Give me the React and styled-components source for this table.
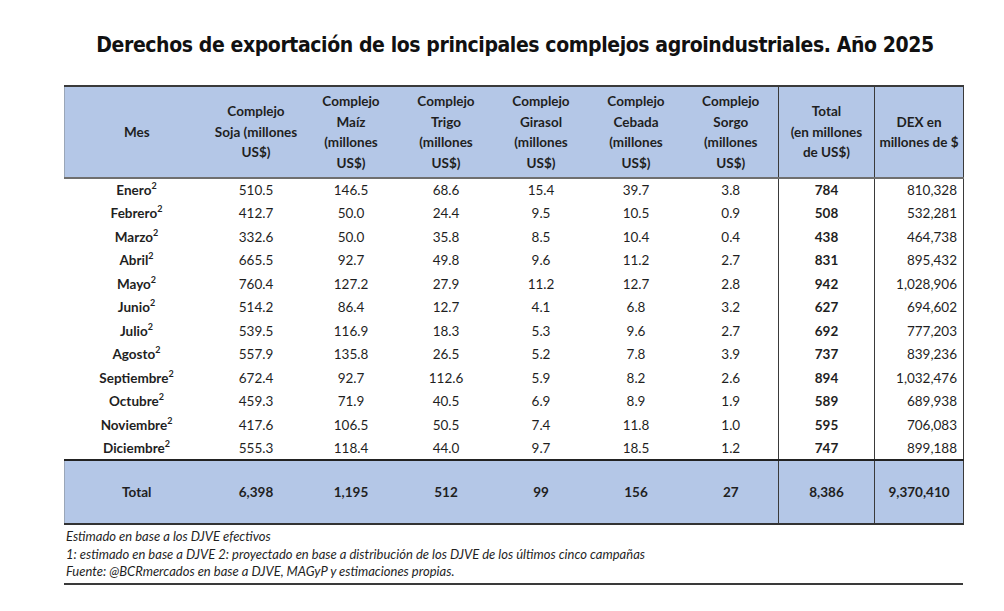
import React from "react";
import styled, { createGlobalStyle } from "styled-components";

const GlobalStyle = createGlobalStyle`
  body {
    margin: 0;
    background: #ffffff;
    font-family: Lato, "Liberation Sans", sans-serif;
    color: #1f1f1f;
  }
`;

const Page = styled.div`
  width: 1004px;
  padding-top: 30px;
`;

const TitleBar = styled.div`
  display: flex;
  justify-content: center;
  height: 30px;
  margin-bottom: 25px;
  padding-left: 26px;
`;

const Title = styled.h1`
  margin: 0;
  white-space: nowrap;
  font-family: "DejaVu Sans", "Liberation Sans", sans-serif;
  font-stretch: condensed;
  font-size: 21px;
  font-weight: 700;
  letter-spacing: -0.4px;
  line-height: 30px;
  color: #111;
`;

const Block = styled.div`
  margin-left: 64px;
  width: 899px;
`;

const Table = styled.table`
  width: 899px;
  border-collapse: collapse;
  table-layout: fixed;
  font-size: 13.5px;
`;

const Head = styled.th`
  background: #b4c7e7;
  height: 90px;
  padding: 0 2px;
  font-weight: 700;
  line-height: 20.5px;
  text-align: center;
  vertical-align: middle;
  border-top: 2px solid #3a3a3a;
  border-bottom: 2px solid #6f6f6f;
  border-left: ${(p) => (p.$edge ? "1px solid #9aa6b8" : p.$rule ? "1.5px solid #3a3a3a" : "none")};
  border-right: ${(p) => (p.$rule ? "1.5px solid #3a3a3a" : "none")};
`;

const Row = styled.tr`
  height: 23.5px;
`;

const Cell = styled.td`
  padding: 0 ${(p) => (p.$right ? "6px" : "2px")};
  text-align: ${(p) => (p.$right ? "right" : "center")};
  font-weight: ${(p) => (p.$bold ? 700 : 400)};
  border-left: ${(p) => (p.$rule ? "1.5px solid #3a3a3a" : "none")};
  border-right: ${(p) => (p.$rule ? "1.5px solid #3a3a3a" : "none")};
  white-space: nowrap;
`;

const Sup = styled.sup`
  font-size: 9px;
  line-height: 0;
  vertical-align: 6px;
`;

const TotalRow = styled.tr`
  height: 64px;
  background: #b4c7e7;
  border-top: 2px solid #222;
  border-bottom: 2px solid #333;
`;

const TotalCell = styled.td`
  text-align: center;
  font-weight: 700;
  border-left: ${(p) => (p.$edge ? "1px solid #9aa6b8" : p.$rule ? "1.5px solid #3a3a3a" : "none")};
  border-right: ${(p) => (p.$rule ? "1.5px solid #3a3a3a" : "none")};
`;

const Notes = styled.div`
  padding: 3px 0 2px 2px;
  font-family: Lato, "Liberation Sans", sans-serif;
  font-style: italic;
  font-size: 13px;
  line-height: 17.5px;
  color: #1f1f1f;
  border-bottom: 2px solid #3a3a3a;
`;

const columns = [
  ["Mes"],
  ["Complejo", "Soja (millones", "US$)"],
  ["Complejo", "Maíz", "(millones", "US$)"],
  ["Complejo", "Trigo", "(millones", "US$)"],
  ["Complejo", "Girasol", "(millones", "US$)"],
  ["Complejo", "Cebada", "(millones", "US$)"],
  ["Complejo", "Sorgo", "(millones", "US$)"],
  ["Total", "(en millones", "de US$)"],
  ["DEX en", "millones de $"],
];

const widths = [144, 95, 95, 95, 95, 95, 95, 96, 89];

const rows = [
  ["Enero", "510.5", "146.5", "68.6", "15.4", "39.7", "3.8", "784", "810,328"],
  ["Febrero", "412.7", "50.0", "24.4", "9.5", "10.5", "0.9", "508", "532,281"],
  ["Marzo", "332.6", "50.0", "35.8", "8.5", "10.4", "0.4", "438", "464,738"],
  ["Abril", "665.5", "92.7", "49.8", "9.6", "11.2", "2.7", "831", "895,432"],
  ["Mayo", "760.4", "127.2", "27.9", "11.2", "12.7", "2.8", "942", "1,028,906"],
  ["Junio", "514.2", "86.4", "12.7", "4.1", "6.8", "3.2", "627", "694,602"],
  ["Julio", "539.5", "116.9", "18.3", "5.3", "9.6", "2.7", "692", "777,203"],
  ["Agosto", "557.9", "135.8", "26.5", "5.2", "7.8", "3.9", "737", "839,236"],
  ["Septiembre", "672.4", "92.7", "112.6", "5.9", "8.2", "2.6", "894", "1,032,476"],
  ["Octubre", "459.3", "71.9", "40.5", "6.9", "8.9", "1.9", "589", "689,938"],
  ["Noviembre", "417.6", "106.5", "50.5", "7.4", "11.8", "1.0", "595", "706,083"],
  ["Diciembre", "555.3", "118.4", "44.0", "9.7", "18.5", "1.2", "747", "899,188"],
];

const totals = ["Total", "6,398", "1,195", "512", "99", "156", "27", "8,386", "9,370,410"];

function HeadText({ lines }) {
  return lines.map((line, i) => (
    <React.Fragment key={i}>
      {i > 0 && <br />}
      {line}
    </React.Fragment>
  ));
}

export default function App() {
  return (
    <Page>
      <GlobalStyle />
      <TitleBar>
        <Title>Derechos de exportación de los principales complejos agroindustriales. Año 2025</Title>
      </TitleBar>
      <Block>
        <Table>
          <colgroup>
            {widths.map((w, i) => (
              <col key={i} style={{ width: w }} />
            ))}
          </colgroup>
          <thead>
            <tr>
              {columns.map((c, i) => (
                <Head key={i} $edge={i === 0} $rule={i >= 7}>
                  <HeadText lines={c} />
                </Head>
              ))}
            </tr>
          </thead>
          <tbody>
            {rows.map((r) => (
              <Row key={r[0]}>
                <Cell $bold>
                  {r[0]}
                  <Sup>2</Sup>
                </Cell>
                {r.slice(1, 7).map((v, i) => (
                  <Cell key={i}>{v}</Cell>
                ))}
                <Cell $bold $rule>{r[7]}</Cell>
                <Cell $right $rule>{r[8]}</Cell>
              </Row>
            ))}
            <TotalRow>
              {totals.map((v, i) => (
                <TotalCell key={i} $edge={i === 0} $rule={i >= 7}>
                  {v}
                </TotalCell>
              ))}
            </TotalRow>
          </tbody>
        </Table>
        <Notes>
          Estimado en base a los DJVE efectivos
          <br />
          1: estimado en base a DJVE 2: proyectado en base a distribución de los DJVE de los últimos cinco campañas
          <br />
          Fuente: @BCRmercados en base a DJVE, MAGyP y estimaciones propias.
        </Notes>
      </Block>
    </Page>
  );
}
